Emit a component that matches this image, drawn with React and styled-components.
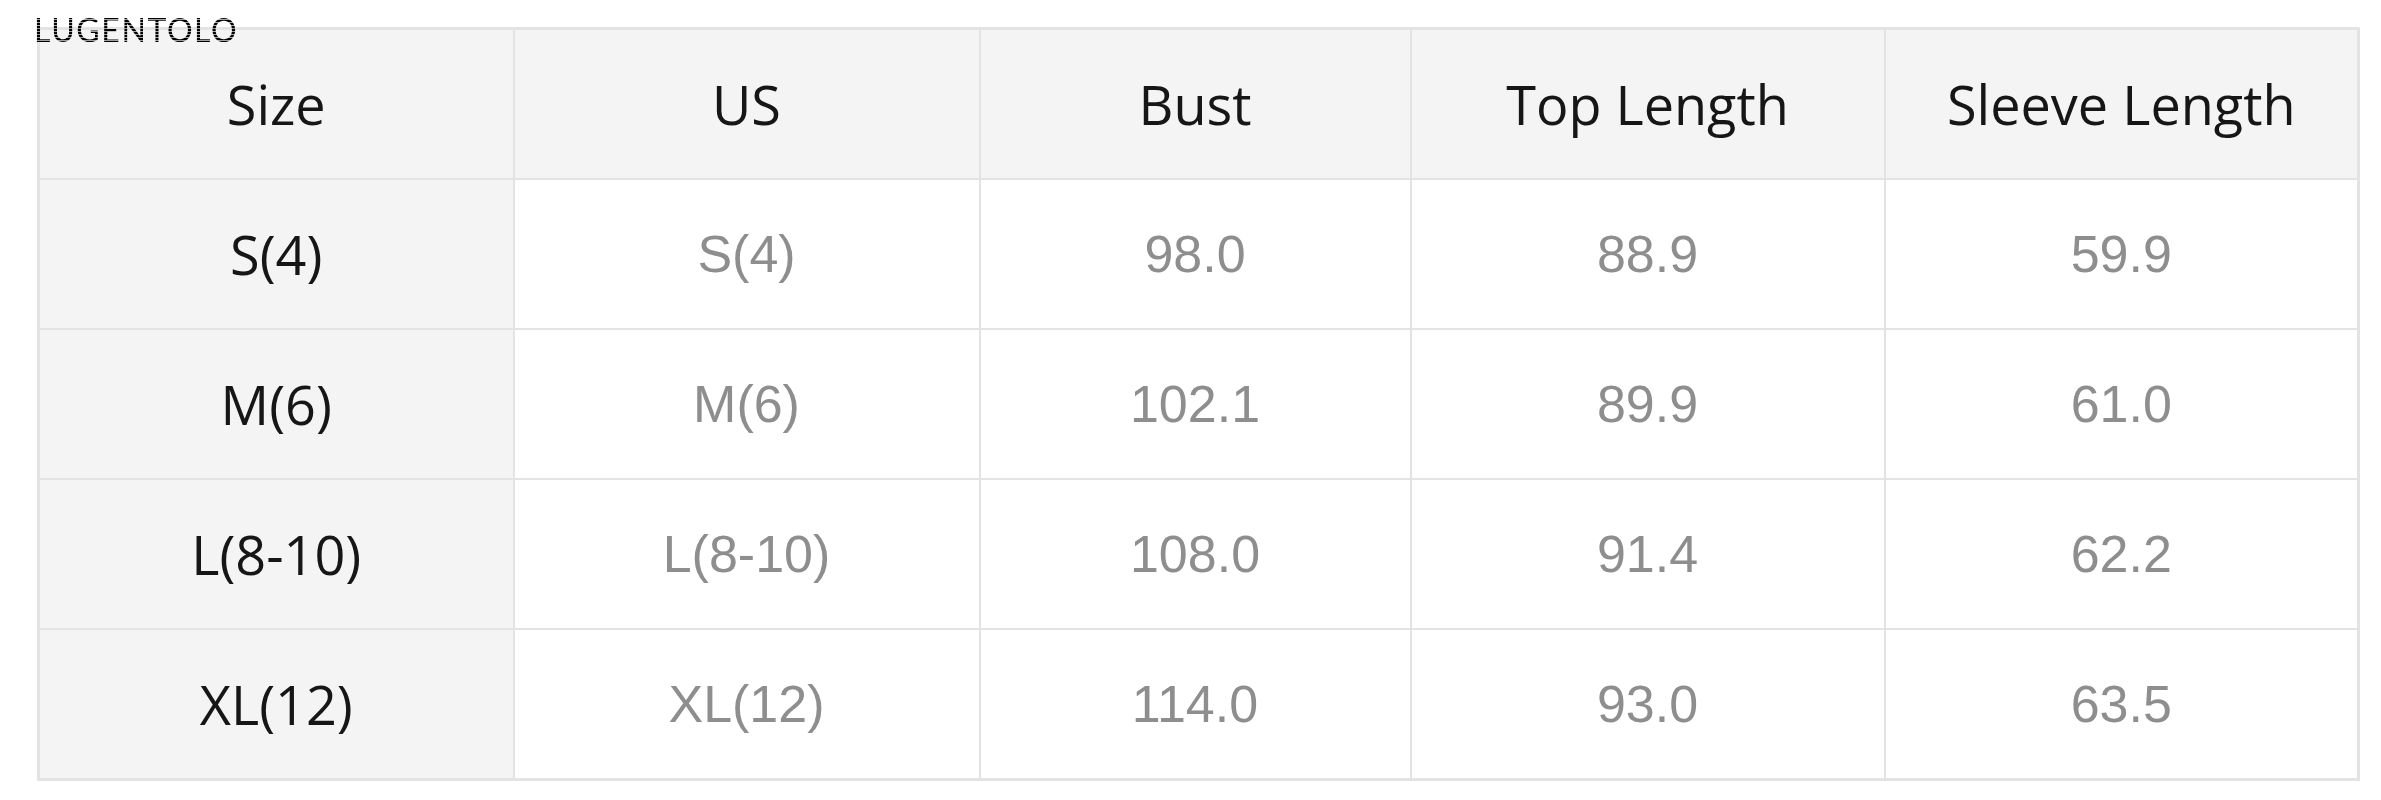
import React from 'react';
import styled, { createGlobalStyle } from 'styled-components';

const GlobalStyle = createGlobalStyle`
  html, body {
    margin: 0;
    padding: 0;
    background: #ffffff;
  }
`;

const Page = styled.div`
  position: relative;
  width: 2381px;
  height: 800px;
  padding: 27px 0 0 37px;
  box-sizing: border-box;
  background: #fff;
`;

const Watermark = styled.div`
  position: absolute;
  left: 34px;
  top: 14px;
  font-family: Lato, "DejaVu Sans", sans-serif;
  font-weight: 400;
  font-size: 32px;
  letter-spacing: 1.6px;
  line-height: 1;
  background: repeating-linear-gradient(to bottom, #000 0 2px, rgba(0, 0, 0, 0.35) 2px 3px);
  -webkit-background-clip: text;
  background-clip: text;
  color: transparent;
  z-index: 2;
`;

const Table = styled.table`
  border-collapse: collapse;
  table-layout: fixed;
  width: 2320px;
  border: 3px solid #e3e3e3;
`;

const HeadCell = styled.th`
  height: 148px;
  padding: 0;
  background: #f4f4f4;
  border: 2px solid #e3e3e3;
  font-family: "Open Sans", "Noto Sans", sans-serif;
  font-weight: 400;
  font-size: 54px;
  color: #161616;
  text-align: center;
  vertical-align: middle;
`;

const Cell = styled.td`
  height: 148px;
  padding: 0;
  border: 2px solid #e3e3e3;
  text-align: center;
  vertical-align: middle;
  background: ${(p) => (p.$label ? '#f4f4f4' : '#ffffff')};
  color: ${(p) => (p.$label ? '#161616' : '#8e8e8e')};
  font-family: ${(p) =>
    p.$label ? '"Open Sans", "Noto Sans", sans-serif' : '"Liberation Sans", Arial, sans-serif'};
  font-size: ${(p) => (p.$label ? '54px' : '52px')};
`;

const columns = [
  { title: 'Size', width: 475 },
  { title: 'US', width: 466 },
  { title: 'Bust', width: 431 },
  { title: 'Top Length', width: 474 },
  { title: 'Sleeve Length', width: 474 },
];

const rows = [
  ['S(4)', 'S(4)', '98.0', '88.9', '59.9'],
  ['M(6)', 'M(6)', '102.1', '89.9', '61.0'],
  ['L(8-10)', 'L(8-10)', '108.0', '91.4', '62.2'],
  ['XL(12)', 'XL(12)', '114.0', '93.0', '63.5'],
];

export default function App() {
  return (
    <>
      <GlobalStyle />
      <Page>
        <Watermark>LUGENTOLO</Watermark>
        <Table>
          <colgroup>
            {columns.map((c) => (
              <col key={c.title} style={{ width: c.width }} />
            ))}
          </colgroup>
          <thead>
            <tr>
              {columns.map((c) => (
                <HeadCell key={c.title}>{c.title}</HeadCell>
              ))}
            </tr>
          </thead>
          <tbody>
            {rows.map((r) => (
              <tr key={r[0]}>
                {r.map((v, i) => (
                  <Cell key={i} $label={i === 0}>
                    {v}
                  </Cell>
                ))}
              </tr>
            ))}
          </tbody>
        </Table>
      </Page>
    </>
  );
}
